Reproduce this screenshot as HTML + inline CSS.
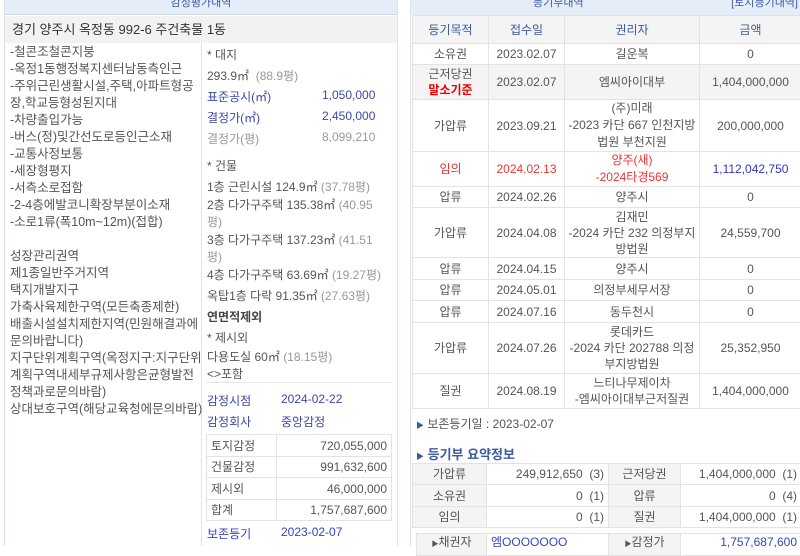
<!DOCTYPE html>
<html><head><meta charset="utf-8"><style>
*{margin:0;padding:0;box-sizing:border-box}
body{width:800px;height:546px;overflow:hidden;background:#fff;font-family:"Liberation Sans","Noto Sans CJK KR","NanumGothic",sans-serif;color:#555;font-size:12px;position:relative}
.a{position:absolute;white-space:nowrap}
.b{color:#3b47a8}
table{border-collapse:collapse;position:absolute;font-size:12px}
td,th{border:1px solid #e3e3e3;text-align:center;padding:0 4px;color:#555;font-weight:normal;line-height:16px}
</style></head><body>
<!-- left panel -->
<div class="a" style="left:4px;top:0;width:394px;height:546px;border-left:1px solid #dde3ec;border-right:1px solid #dde3ec"></div>
<div class="a" style="left:5px;top:0;width:392px;height:15px;background:#e4edf8;border-bottom:1px solid #d0d8e6;text-align:center;color:#3b5aa0;font-size:11px;line-height:6px">감정평가내역</div>
<div class="a" style="left:5px;top:16px;width:392px;height:27px;background:#f2f2f2;font-size:13px;line-height:27px;padding-left:7px;color:#333">경기 양주시 옥정동 992-6 주건축물 1동</div>
<div class="a" style="left:201px;top:43px;width:1px;height:503px;background:#e3e3e3"></div>
<div class="a" style="left:10px;top:44px;font-size:12.5px;line-height:17px;color:#555">-철콘조철콘지붕<br>-옥정1동행정복지센터남동측인근<br>-주위근린생활시설,주택,아파트형공<br>장,학교등형성된지대<br>-차량출입가능<br>-버스(정)및간선도로등인근소재<br>-교통사정보통<br>-세장형평지<br>-서측소로접함<br>-2-4층에발코니확장부분이소재<br>-소로1류(폭10m~12m)(접합)<br>&nbsp;<br>성장관리권역<br>제1종일반주거지역<br>택지개발지구<br>가축사육제한구역(모든축종제한)<br>배출시설설치제한지역(민원해결과에<br>문의바랍니다)<br>지구단위계획구역(옥정지구:지구단위<br>계획구역내세부규제사항은균형발전<br>정책과로문의바람)<br>상대보호구역(해당교육청에문의바람)</div>
<div class="a" style="left:207px;top:46px">* 대지</div>
<div class="a" style="left:207px;top:67px">293.9㎡ <span style="color:#999">&nbsp;(88.9평)</span></div>
<div class="a b" style="left:207px;top:88px">표준공시(㎡)</div><div class="a b" style="left:322px;top:88px">1,050,000</div>
<div class="a b" style="left:207px;top:109px">결정가(㎡)</div><div class="a b" style="left:322px;top:109px">2,450,000</div>
<div class="a" style="left:207px;top:130px;color:#999">결정가(평)</div><div class="a" style="left:322px;top:130px;color:#999">8,099,210</div>
<div class="a" style="left:207px;top:157px">* 건물</div>
<div class="a" style="left:207px;top:178px">1층 근린시설 124.9㎡ <span style="color:#999">(37.78평)</span></div>
<div class="a" style="left:207px;top:197px;line-height:17px">2층 다가구주택 135.38㎡ <span style="color:#999">(40.95<br>평)</span></div>
<div class="a" style="left:207px;top:232px;line-height:17px">3층 다가구주택 137.23㎡ <span style="color:#999">(41.51<br>평)</span></div>
<div class="a" style="left:207px;top:266px">4층 다가구주택 63.69㎡ <span style="color:#999">(19.27평)</span></div>
<div class="a" style="left:207px;top:287px">옥탑1층 다락 91.35㎡ <span style="color:#999">(27.63평)</span></div>
<div class="a" style="left:207px;top:308px;font-weight:bold;color:#444">연면적제외</div>
<div class="a" style="left:207px;top:329px">* 제시외</div>
<div class="a" style="left:207px;top:348px">다용도실 60㎡ <span style="color:#999">(18.15평)</span></div>
<div class="a" style="left:207px;top:365px">&lt;&gt;포함</div>
<div class="a" style="left:206px;top:382px;width:186px;height:1px;background:#e6e6e6"></div>
<div class="a b" style="left:207px;top:392px">감정시점</div><div class="a b" style="left:281px;top:392px">2024-02-22</div>
<div class="a b" style="left:207px;top:413px">감정회사</div><div class="a b" style="left:281px;top:413px">중앙감정</div>
<table style="left:206px;top:434px;width:186px">
<tr style="height:22px"><td style="text-align:left;width:70px">토지감정</td><td style="text-align:right">720,055,000</td></tr>
<tr style="height:21px"><td style="text-align:left">건물감정</td><td style="text-align:right">991,632,600</td></tr>
<tr style="height:22px"><td style="text-align:left">제시외</td><td style="text-align:right">46,000,000</td></tr>
<tr style="height:21px"><td style="text-align:left">합계</td><td style="text-align:right">1,757,687,600</td></tr>
</table>
<div class="a b" style="left:207px;top:525px;color:#3346c0">보존등기</div><div class="a b" style="left:281px;top:525px;color:#3346c0">2023-02-07</div>

<!-- right panel -->
<div class="a" style="left:410px;top:0;width:390px;height:546px;border-left:1px solid #dde3ec"></div>
<div class="a" style="left:411px;top:0;width:389px;height:15px;background:#e4edf8;color:#3b5aa0;font-size:11px;line-height:6px"><span style="margin-left:122px">등기부내역</span><span style="position:absolute;right:2px">[토지등기내역]</span></div>
<table style="left:412px;top:15px;width:390px">
<tr style="height:28px;background:#f4f4f4"><th style="width:76px;color:#3b5aa0">등기목적</th><th style="width:76px;color:#3b5aa0">접수일</th><th style="width:135px;color:#3b5aa0">권리자</th><th style="color:#3b5aa0">금액</th></tr>
<tr style="height:21px"><td>소유권</td><td>2023.02.07</td><td>길운복</td><td>0</td></tr>
<tr style="height:35px;background:#f4f4f4"><td>근저당권<br><b style="color:#e00">말소기준</b></td><td>2023.02.07</td><td>엠씨아이대부</td><td>1,404,000,000</td></tr>
<tr style="height:51px"><td>가압류</td><td>2023.09.21</td><td style="line-height:17px;padding:0 2px">(주)미래<br>-2023 카단 667 인천지방<br>법원 부천지원</td><td>200,000,000</td></tr>
<tr style="height:35px"><td style="color:#e33">임의</td><td style="color:#e33">2024.02.13</td><td style="color:#e33;line-height:17px">양주(새)<br>-2024타경569</td><td style="color:#33c">1,112,042,750</td></tr>
<tr style="height:21px"><td>압류</td><td>2024.02.26</td><td>양주시</td><td>0</td></tr>
<tr style="height:50px"><td>가압류</td><td>2024.04.08</td><td style="padding:0 2px">김재민<br>-2024 카단 232 의정부지<br>방법원</td><td>24,559,700</td></tr>
<tr style="height:22px"><td>압류</td><td>2024.04.15</td><td>양주시</td><td>0</td></tr>
<tr style="height:21px"><td>압류</td><td>2024.05.01</td><td>의정부세무서장</td><td>0</td></tr>
<tr style="height:22px"><td>압류</td><td>2024.07.16</td><td>동두천시</td><td>0</td></tr>
<tr style="height:51px"><td>가압류</td><td>2024.07.26</td><td style="padding:0 2px">롯데카드<br>-2024 카단 202788 의정<br>부지방법원</td><td>25,352,950</td></tr>
<tr style="height:35px"><td>질권</td><td>2024.08.19</td><td>느티나무제이차<br>-엠씨아이대부근저질권</td><td>1,404,000,000</td></tr>
</table>
<div class="a" style="left:416px;top:415px;font-size:12px"><span style="color:#3b5aa0;font-size:8px">▶</span> 보존등기일 : 2023-02-07</div>
<div class="a" style="left:416px;top:444px;font-size:13px;font-weight:bold;color:#3b5aa0"><span style="font-size:8px">▶</span> 등기부 요약정보</div>
<table style="left:412px;top:463px;width:390px">
<tr style="height:21px;"><td style="width:74px;background:#f4f4f4">가압류</td><td style="width:122px;text-align:right">249,912,650 &nbsp;(3)</td><td style="width:72px;background:#f4f4f4">근저당권</td><td style="text-align:right">1,404,000,000 &nbsp;(1)</td></tr>
<tr style="height:22px"><td style="background:#f4f4f4">소유권</td><td style="text-align:right">0 &nbsp;(1)</td><td style="background:#f4f4f4">압류</td><td style="text-align:right">0 &nbsp;(4)</td></tr>
<tr style="height:21px"><td style="background:#f4f4f4">임의</td><td style="text-align:right">0 &nbsp;(1)</td><td style="background:#f4f4f4">질권</td><td style="text-align:right">1,404,000,000 &nbsp;(1)</td></tr>
</table>
<table style="left:416px;top:533px;width:386px">
<tr style="height:22px"><td style="width:70px;background:#f4f4f4;vertical-align:top"><span style="font-size:7px">▶</span>채권자</td><td style="width:122px;text-align:left;color:#3346c0;vertical-align:top">엠OOOOOOO</td><td style="width:72px;background:#f4f4f4;vertical-align:top"><span style="font-size:7px">▶</span>감정가</td><td style="text-align:right;color:#3346c0;vertical-align:top">1,757,687,600</td></tr>
</table>
</body></html>
